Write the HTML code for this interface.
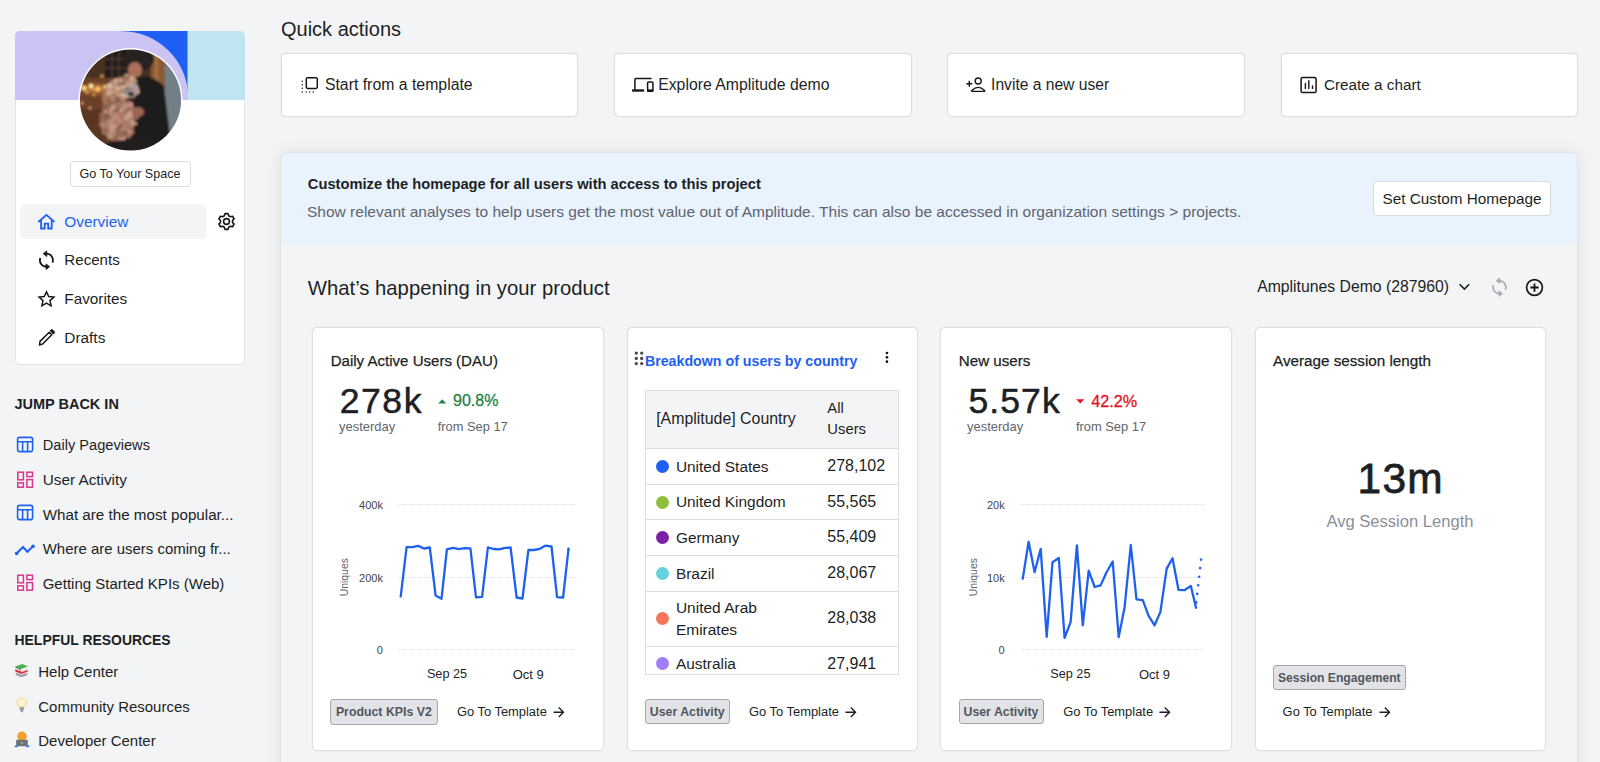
<!DOCTYPE html>
<html><head><meta charset="utf-8"><style>
html,body{margin:0;padding:0;}
body{width:1600px;height:762px;overflow:hidden;position:relative;background:#f3f4f6;font-family:"Liberation Sans", sans-serif;}
.t{position:absolute;white-space:nowrap;}
</style></head><body>
<div style="position:absolute;left:15.00px;top:31.00px;width:230.00px;height:334.00px;background:#fff;border:1px solid #e2e4e8;border-radius:5px;box-sizing:border-box;"></div>
<svg style="position:absolute;left:15.00px;top:31.00px;" width="230" height="69" viewBox="0 0 230 69">
<defs><clipPath id="bc"><path d="M5 0H225A5 5 0 0 1 230 5V69H0V5A5 5 0 0 1 5 0Z"/></clipPath></defs>
<g clip-path="url(#bc)">
<rect x="0" y="0" width="230" height="69" fill="#c1e5f0"/>
<rect x="100" y="0" width="72.5" height="69" fill="#1f5ff4"/>
<rect x="0" y="0" width="106.7" height="69" fill="#cbc3f4"/>
<circle cx="106.7" cy="66.7" r="66.5" fill="#cbc3f4"/>
</g></svg>
<svg style="position:absolute;left:78.00px;top:48.00px;" width="105" height="105" viewBox="0 0 105 105">
<defs><clipPath id="av"><circle cx="52.5" cy="52" r="50.6"/></clipPath>
<radialGradient id="glow" cx="0.5" cy="0.5" r="0.5"><stop offset="0" stop-color="#f0a048"/><stop offset="1" stop-color="#8a5030" stop-opacity="0"/></radialGradient>
<filter id="bl" x="-10%" y="-10%" width="120%" height="120%"><feGaussianBlur stdDeviation="1.0"/></filter>
</defs>
<circle cx="52.5" cy="52" r="52" fill="#fff"/>
<g clip-path="url(#av)"><g filter="url(#bl)">
<rect width="105" height="105" fill="#6a3f27"/>
<rect x="0" y="0" width="105" height="30" fill="#4a3020"/>
<rect x="27" y="1" width="22" height="29" fill="#241c1a"/>
<path d="M34 1V30M41 1V30M27 11H49M27 20H49" stroke="#5a4434" stroke-width="1"/>
<ellipse cx="18" cy="41" rx="22" ry="9" fill="url(#glow)"/>
<circle cx="6" cy="40" r="2.6" fill="#ffd77a"/><circle cx="13" cy="38" r="2.2" fill="#fff0b0"/><circle cx="20" cy="41" r="2.4" fill="#ffc860"/><circle cx="27" cy="39" r="1.8" fill="#ffe39a"/><circle cx="9" cy="44" r="1.6" fill="#f6a848"/><circle cx="31" cy="43" r="1.6" fill="#f0a040"/><circle cx="16" cy="47" r="1.3" fill="#e89a48"/><circle cx="4" cy="55" r="1.8" fill="#c98a60"/><circle cx="12" cy="60" r="1.4" fill="#d89870"/><circle cx="24" cy="28" r="1.6" fill="#e0a060"/><circle cx="92" cy="38" r="2.2" fill="#e8b070"/><circle cx="96" cy="48" r="1.6" fill="#a8b4b8"/><circle cx="90" cy="62" r="1.4" fill="#9fb0a8"/>
<rect x="0" y="62" width="28" height="43" fill="#5a3424"/>
<rect x="73" y="4" width="14" height="84" fill="#8b5a36"/>
<rect x="77" y="4" width="3" height="84" fill="#a86e40"/>
<rect x="87" y="16" width="18" height="74" fill="#718086"/>
<ellipse cx="61" cy="11" rx="15" ry="12" fill="#262222"/>
<ellipse cx="57" cy="22" rx="7" ry="8" fill="#a86e58"/>
<path d="M50 32Q70 22 86 38L94 105H46Z" fill="#1c1a1e"/>
<ellipse cx="31" cy="50" rx="7" ry="12" fill="#a87456"/>
<ellipse cx="45" cy="40" rx="14" ry="11" fill="#b89078"/>
<ellipse cx="40" cy="72" rx="17" ry="21" fill="#a47a64"/>
<circle cx="45.8" cy="48.8" r="2.2" fill="#9a7060"/><circle cx="33.7" cy="41.5" r="2.7" fill="#d8b8a0"/><circle cx="44.6" cy="45.8" r="3.5" fill="#d8b8a0"/><circle cx="34.2" cy="37.7" r="2.3" fill="#d0a88e"/><circle cx="45.7" cy="44.6" r="3.4" fill="#d8b8a0"/><circle cx="44.3" cy="30.2" r="1.6" fill="#9a7060"/><circle cx="57.8" cy="42.8" r="3.1" fill="#a8806a"/><circle cx="32.5" cy="41.7" r="3.3" fill="#d8b8a0"/><circle cx="34.4" cy="46.6" r="2.4" fill="#d0a88e"/><circle cx="48.4" cy="37.4" r="1.8" fill="#d0a88e"/><circle cx="44.4" cy="49.8" r="3.1" fill="#a8806a"/><circle cx="33.0" cy="45.2" r="2.6" fill="#9a7060"/><circle cx="35.1" cy="35.3" r="3.3" fill="#c09478"/><circle cx="54.3" cy="30.6" r="2.8" fill="#d0a88e"/><circle cx="42.3" cy="33.5" r="2.6" fill="#9a7060"/><circle cx="33.5" cy="35.7" r="1.9" fill="#9a7060"/><circle cx="44.4" cy="44.2" r="2.5" fill="#d8b8a0"/><circle cx="56.4" cy="45.7" r="2.3" fill="#d0a88e"/><circle cx="54.7" cy="41.0" r="2.3" fill="#c09478"/><circle cx="56.3" cy="42.6" r="1.6" fill="#9a7060"/><circle cx="38.1" cy="49.8" r="3.5" fill="#9a7060"/><circle cx="45.3" cy="42.3" r="1.5" fill="#c09478"/><circle cx="42.8" cy="38.8" r="1.9" fill="#d8b8a0"/><circle cx="43.0" cy="45.9" r="2.9" fill="#a8806a"/><circle cx="39.3" cy="50.8" r="3.3" fill="#d8b8a0"/><circle cx="35.0" cy="47.8" r="2.3" fill="#9a7060"/><circle cx="43.0" cy="36.5" r="3.4" fill="#9a7060"/><circle cx="43.4" cy="49.5" r="2.9" fill="#a8806a"/><circle cx="38.0" cy="42.3" r="2.1" fill="#a8806a"/><circle cx="54.6" cy="40.6" r="2.7" fill="#c09478"/><circle cx="36.8" cy="46.5" r="1.8" fill="#a8806a"/><circle cx="32.9" cy="42.1" r="2.2" fill="#a8806a"/><circle cx="44.8" cy="38.2" r="1.6" fill="#c09478"/><circle cx="52.3" cy="38.6" r="2.4" fill="#9a7060"/><circle cx="39.9" cy="37.0" r="1.9" fill="#a8806a"/><circle cx="49.3" cy="34.9" r="3.1" fill="#c09478"/><circle cx="45.3" cy="38.1" r="2.6" fill="#d0a88e"/><circle cx="42.4" cy="45.3" r="3.1" fill="#d0a88e"/><circle cx="39.2" cy="48.7" r="2.8" fill="#c09478"/><circle cx="51.8" cy="44.1" r="2.2" fill="#d0a88e"/><circle cx="32.2" cy="44.2" r="1.8" fill="#a8806a"/><circle cx="44.7" cy="34.4" r="2.6" fill="#a8806a"/><circle cx="45.8" cy="44.1" r="2.6" fill="#d0a88e"/><circle cx="39.5" cy="50.1" r="2.6" fill="#a8806a"/><circle cx="37.7" cy="49.2" r="1.7" fill="#9a7060"/><circle cx="42.0" cy="43.6" r="2.1" fill="#a8806a"/><circle cx="33.3" cy="42.1" r="2.1" fill="#9a7060"/><circle cx="32.9" cy="46.2" r="1.8" fill="#c09478"/><circle cx="31.5" cy="41.6" r="2.7" fill="#9a7060"/><circle cx="31.6" cy="44.7" r="3.4" fill="#d0a88e"/><circle cx="54.9" cy="41.6" r="3.0" fill="#9a7060"/><circle cx="55.8" cy="38.0" r="3.3" fill="#c09478"/><circle cx="54.3" cy="30.8" r="1.7" fill="#d0a88e"/><circle cx="58.7" cy="43.2" r="2.9" fill="#d0a88e"/><circle cx="56.3" cy="33.1" r="2.7" fill="#c09478"/><circle cx="39.8" cy="40.5" r="2.5" fill="#d0a88e"/><circle cx="39.3" cy="32.6" r="2.3" fill="#9a7060"/><circle cx="49.0" cy="42.8" r="3.4" fill="#9a7060"/><circle cx="31.9" cy="41.5" r="2.2" fill="#d0a88e"/><circle cx="55.2" cy="47.9" r="1.7" fill="#d0a88e"/><circle cx="48.7" cy="28.9" r="3.1" fill="#c09478"/><circle cx="33.7" cy="40.7" r="2.3" fill="#a8806a"/><circle cx="45.1" cy="49.4" r="2.5" fill="#c09478"/><circle cx="32.0" cy="41.8" r="1.5" fill="#c09478"/><circle cx="45.5" cy="37.5" r="1.6" fill="#d8b8a0"/><circle cx="58.7" cy="38.2" r="1.7" fill="#9a7060"/><circle cx="39.1" cy="40.3" r="1.6" fill="#d8b8a0"/><circle cx="38.1" cy="32.7" r="2.2" fill="#d0a88e"/><circle cx="54.8" cy="39.4" r="1.8" fill="#c09478"/><circle cx="43.0" cy="32.8" r="1.7" fill="#d0a88e"/><circle cx="54.8" cy="42.2" r="2.8" fill="#9a7060"/><circle cx="35.2" cy="47.3" r="2.7" fill="#d8b8a0"/><circle cx="56.2" cy="43.1" r="3.0" fill="#a8806a"/><circle cx="34.0" cy="44.8" r="2.4" fill="#d0a88e"/><circle cx="46.5" cy="46.1" r="2.7" fill="#d8b8a0"/><circle cx="45.9" cy="44.3" r="1.6" fill="#a8806a"/><circle cx="35.0" cy="48.1" r="3.1" fill="#a8806a"/><circle cx="54.0" cy="46.9" r="3.4" fill="#9a7060"/><circle cx="48.2" cy="30.5" r="3.0" fill="#9a7060"/><circle cx="31.8" cy="37.8" r="2.9" fill="#d8b8a0"/><circle cx="49.8" cy="87.2" r="1.6" fill="#a87c66"/><circle cx="26.6" cy="65.0" r="2.3" fill="#a87c66"/><circle cx="31.0" cy="89.0" r="1.6" fill="#a87c66"/><circle cx="32.4" cy="54.2" r="3.4" fill="#8a5e4a"/><circle cx="38.4" cy="78.2" r="3.5" fill="#8a5e4a"/><circle cx="24.8" cy="70.7" r="1.7" fill="#c88a84"/><circle cx="50.8" cy="81.6" r="2.6" fill="#8a5e4a"/><circle cx="42.1" cy="77.5" r="3.5" fill="#c88a84"/><circle cx="40.0" cy="89.3" r="3.0" fill="#c89c88"/><circle cx="39.7" cy="89.0" r="3.4" fill="#8a5e4a"/><circle cx="35.5" cy="75.1" r="2.5" fill="#c89c88"/><circle cx="49.8" cy="54.0" r="2.3" fill="#8a5e4a"/><circle cx="40.6" cy="54.0" r="2.5" fill="#c89c88"/><circle cx="46.3" cy="83.6" r="3.3" fill="#b88e78"/><circle cx="52.8" cy="82.8" r="3.3" fill="#8a5e4a"/><circle cx="53.1" cy="66.9" r="3.2" fill="#b88e78"/><circle cx="39.1" cy="81.8" r="2.7" fill="#946852"/><circle cx="55.2" cy="63.9" r="2.6" fill="#946852"/><circle cx="32.1" cy="54.1" r="2.7" fill="#8a5e4a"/><circle cx="32.0" cy="66.2" r="1.9" fill="#a87c66"/><circle cx="38.2" cy="91.6" r="1.9" fill="#8a5e4a"/><circle cx="33.5" cy="81.6" r="3.0" fill="#b88e78"/><circle cx="26.9" cy="81.0" r="2.9" fill="#b88e78"/><circle cx="23.9" cy="76.0" r="3.1" fill="#8a5e4a"/><circle cx="57.7" cy="75.8" r="1.6" fill="#c89c88"/><circle cx="43.5" cy="51.8" r="1.6" fill="#b88e78"/><circle cx="51.2" cy="60.8" r="3.1" fill="#a87c66"/><circle cx="56.1" cy="66.8" r="2.0" fill="#b88e78"/><circle cx="41.1" cy="63.9" r="2.7" fill="#c88a84"/><circle cx="50.8" cy="55.8" r="2.0" fill="#a87c66"/><circle cx="35.5" cy="85.2" r="3.0" fill="#a87c66"/><circle cx="46.8" cy="79.6" r="3.3" fill="#a87c66"/><circle cx="31.5" cy="85.1" r="2.9" fill="#a87c66"/><circle cx="50.2" cy="74.3" r="2.3" fill="#a87c66"/><circle cx="43.4" cy="88.3" r="3.4" fill="#c89c88"/><circle cx="47.2" cy="80.8" r="3.3" fill="#a87c66"/><circle cx="36.9" cy="65.6" r="3.3" fill="#946852"/><circle cx="54.3" cy="84.2" r="2.2" fill="#946852"/><circle cx="40.5" cy="60.1" r="2.9" fill="#c88a84"/><circle cx="55.3" cy="65.2" r="1.7" fill="#946852"/><circle cx="33.9" cy="57.7" r="1.7" fill="#c89c88"/><circle cx="35.6" cy="71.7" r="2.1" fill="#c88a84"/><circle cx="33.0" cy="68.2" r="2.8" fill="#c88a84"/><circle cx="46.5" cy="82.8" r="3.3" fill="#c89c88"/><circle cx="52.4" cy="86.8" r="1.8" fill="#946852"/><circle cx="31.1" cy="58.0" r="2.3" fill="#946852"/><circle cx="32.7" cy="60.1" r="2.1" fill="#b88e78"/><circle cx="38.4" cy="65.1" r="1.9" fill="#8a5e4a"/><circle cx="25.1" cy="66.9" r="2.2" fill="#946852"/><circle cx="39.5" cy="77.0" r="1.8" fill="#c89c88"/><circle cx="31.1" cy="71.7" r="3.0" fill="#946852"/><circle cx="52.4" cy="56.9" r="2.4" fill="#a87c66"/><circle cx="30.0" cy="88.2" r="1.7" fill="#946852"/><circle cx="27.5" cy="62.3" r="2.6" fill="#c88a84"/><circle cx="51.5" cy="83.9" r="2.6" fill="#c88a84"/><circle cx="39.3" cy="52.1" r="3.0" fill="#8a5e4a"/><circle cx="27.0" cy="59.2" r="3.1" fill="#8a5e4a"/><circle cx="26.6" cy="69.1" r="1.9" fill="#946852"/><circle cx="33.3" cy="80.7" r="3.2" fill="#c89c88"/><circle cx="53.6" cy="58.5" r="2.3" fill="#8a5e4a"/><circle cx="48.3" cy="65.2" r="2.5" fill="#8a5e4a"/><circle cx="36.2" cy="60.9" r="3.2" fill="#c89c88"/><circle cx="47.7" cy="73.8" r="2.8" fill="#a87c66"/><circle cx="41.9" cy="54.2" r="2.5" fill="#8a5e4a"/><circle cx="34.3" cy="65.1" r="3.1" fill="#b88e78"/><circle cx="52.4" cy="75.6" r="2.8" fill="#c89c88"/><circle cx="47.3" cy="79.6" r="2.8" fill="#b88e78"/><circle cx="50.6" cy="86.7" r="2.7" fill="#a87c66"/><circle cx="54.0" cy="74.8" r="2.5" fill="#c89c88"/><circle cx="23.2" cy="66.9" r="2.1" fill="#946852"/><circle cx="37.8" cy="64.4" r="3.2" fill="#8a5e4a"/><circle cx="40.5" cy="68.0" r="1.7" fill="#946852"/><circle cx="48.2" cy="71.9" r="1.6" fill="#b88e78"/><circle cx="25.6" cy="79.4" r="2.5" fill="#a87c66"/><circle cx="42.6" cy="58.3" r="3.2" fill="#c88a84"/><circle cx="46.7" cy="85.1" r="2.9" fill="#8a5e4a"/><circle cx="44.9" cy="63.9" r="2.5" fill="#a87c66"/><circle cx="24.7" cy="76.2" r="2.3" fill="#b88e78"/><circle cx="36.7" cy="73.2" r="2.0" fill="#946852"/><circle cx="29.8" cy="76.3" r="2.3" fill="#a87c66"/><circle cx="43.1" cy="61.5" r="2.2" fill="#c89c88"/><circle cx="33.0" cy="70.1" r="1.5" fill="#8a5e4a"/><circle cx="33.9" cy="77.1" r="1.6" fill="#a87c66"/><circle cx="30.7" cy="62.8" r="1.9" fill="#a87c66"/><circle cx="31.7" cy="79.1" r="1.6" fill="#c88a84"/><circle cx="50.8" cy="76.4" r="2.3" fill="#a87c66"/><circle cx="54.2" cy="60.8" r="2.0" fill="#c89c88"/><circle cx="32.8" cy="73.4" r="2.7" fill="#946852"/><circle cx="51.8" cy="63.2" r="3.1" fill="#946852"/><circle cx="37.5" cy="91.3" r="2.4" fill="#946852"/><circle cx="26.6" cy="73.2" r="1.6" fill="#946852"/><circle cx="32.7" cy="62.6" r="1.7" fill="#c88a84"/><circle cx="35.1" cy="74.6" r="2.7" fill="#a87c66"/><circle cx="45.3" cy="73.3" r="1.8" fill="#a87c66"/><circle cx="32.2" cy="73.1" r="2.5" fill="#946852"/><circle cx="45.4" cy="92.7" r="2.5" fill="#c89c88"/><circle cx="55.2" cy="61.4" r="1.6" fill="#946852"/><circle cx="40.1" cy="54.5" r="2.3" fill="#946852"/><circle cx="44.7" cy="84.9" r="2.5" fill="#8a5e4a"/><circle cx="32.5" cy="87.7" r="3.4" fill="#b88e78"/><circle cx="48.7" cy="54.6" r="2.3" fill="#8a5e4a"/><circle cx="35.1" cy="79.3" r="3.1" fill="#c89c88"/><circle cx="42.1" cy="91.3" r="2.5" fill="#946852"/><circle cx="45.5" cy="57.9" r="3.0" fill="#c88a84"/><circle cx="34.3" cy="51.7" r="1.6" fill="#b88e78"/><circle cx="39.3" cy="68.8" r="2.4" fill="#c88a84"/><circle cx="37.5" cy="65.8" r="2.0" fill="#c88a84"/><circle cx="53.2" cy="78.0" r="1.6" fill="#c89c88"/><circle cx="52.3" cy="60.6" r="2.2" fill="#946852"/><circle cx="47.9" cy="72.1" r="3.1" fill="#a87c66"/><circle cx="34.7" cy="82.4" r="2.4" fill="#c88a84"/><circle cx="43.7" cy="89.7" r="3.5" fill="#c88a84"/><circle cx="51.1" cy="89.1" r="1.7" fill="#946852"/><circle cx="48.3" cy="69.9" r="2.6" fill="#c89c88"/><circle cx="22.9" cy="71.3" r="2.1" fill="#8a5e4a"/><circle cx="42.5" cy="57.3" r="2.7" fill="#a87c66"/><circle cx="42.8" cy="65.4" r="1.5" fill="#a87c66"/><circle cx="45.3" cy="91.7" r="1.7" fill="#c89c88"/><circle cx="26.8" cy="83.8" r="2.9" fill="#a87c66"/><circle cx="30.1" cy="57.1" r="3.2" fill="#946852"/><circle cx="28.0" cy="82.3" r="3.1" fill="#946852"/><circle cx="47.1" cy="57.4" r="3.1" fill="#b88e78"/><circle cx="41.2" cy="73.3" r="2.1" fill="#c88a84"/><circle cx="49.4" cy="78.0" r="2.5" fill="#a87c66"/><circle cx="53.2" cy="63.6" r="2.2" fill="#c88a84"/><circle cx="51.8" cy="78.5" r="2.0" fill="#a87c66"/><circle cx="34.0" cy="84.4" r="1.7" fill="#b88e78"/><circle cx="33.1" cy="89.1" r="1.9" fill="#b88e78"/><circle cx="52.6" cy="56.5" r="2.7" fill="#c88a84"/><circle cx="28.6" cy="68.8" r="3.4" fill="#8a5e4a"/><circle cx="51.9" cy="67.2" r="3.0" fill="#c89c88"/><circle cx="26.5" cy="75.2" r="1.6" fill="#a87c66"/><circle cx="42.2" cy="78.2" r="2.9" fill="#946852"/><circle cx="35.5" cy="71.9" r="2.4" fill="#b88e78"/><circle cx="39.7" cy="60.4" r="2.4" fill="#946852"/><circle cx="32.2" cy="73.9" r="3.1" fill="#b88e78"/><circle cx="47.8" cy="79.3" r="2.3" fill="#a87c66"/><circle cx="43.5" cy="86.8" r="3.1" fill="#946852"/><circle cx="57.6" cy="68.8" r="3.3" fill="#946852"/><circle cx="51.1" cy="66.9" r="3.4" fill="#c89c88"/><circle cx="47.9" cy="42.3" r="1.7" fill="#8e8682"/><circle cx="52.0" cy="47.0" r="2.4" fill="#8e8682"/><circle cx="52.9" cy="37.2" r="1.9" fill="#a49a96"/><circle cx="56.5" cy="46.2" r="1.9" fill="#a49a96"/><circle cx="53.3" cy="42.9" r="2.5" fill="#8e8682"/><circle cx="48.8" cy="47.7" r="1.7" fill="#b8aea8"/><circle cx="55.9" cy="43.6" r="1.2" fill="#8e8682"/><circle cx="58.3" cy="39.9" r="2.0" fill="#a49a96"/><circle cx="49.6" cy="43.9" r="2.1" fill="#8e8682"/><circle cx="49.9" cy="44.5" r="1.3" fill="#8e8682"/><circle cx="59.8" cy="44.4" r="1.4" fill="#b8aea8"/><circle cx="53.0" cy="45.2" r="2.2" fill="#8e8682"/><circle cx="46.6" cy="42.7" r="1.9" fill="#8e8682"/><circle cx="54.5" cy="43.1" r="1.8" fill="#a49a96"/><circle cx="58.3" cy="39.6" r="1.8" fill="#b8aea8"/><circle cx="53.2" cy="37.4" r="2.5" fill="#b8aea8"/><circle cx="48.7" cy="45.2" r="1.4" fill="#a49a96"/><circle cx="55.3" cy="44.0" r="2.3" fill="#a49a96"/><circle cx="49.5" cy="44.9" r="1.8" fill="#8e8682"/><circle cx="46.4" cy="44.7" r="1.4" fill="#8e8682"/><circle cx="53.9" cy="43.9" r="1.8" fill="#a49a96"/><circle cx="56.2" cy="37.9" r="2.0" fill="#a49a96"/>
<ellipse cx="45" cy="36" rx="1.6" ry="1.3" fill="#2a2222"/>
<ellipse cx="53" cy="46" rx="2.8" ry="2.1" fill="#242022"/>
<ellipse cx="60" cy="64" rx="6" ry="5" fill="#9a6652"/>
<path d="M20 97Q55 86 95 98V106H15Z" fill="#221c1e"/>
</g></g></svg>
<div style="position:absolute;left:69.60px;top:161.00px;width:121.20px;height:25.60px;border:1px solid #d9dbe0;border-radius:4px;box-sizing:border-box;background:#fff;"></div>
<div class="t" style="left:79.50px;top:168.47px;font-size:12.56px;line-height:12.56px;color:#1d1f24;font-weight:400;">Go To Your Space</div>
<div style="position:absolute;left:20.00px;top:204.00px;width:187.00px;height:34.60px;background:#f3f4f6;border-radius:5px;"></div>
<svg style="position:absolute;left:37.00px;top:212.50px;" width="19" height="17" viewBox="0 0 19 17"><path d="M1.3 9L9.4 1.9L17.5 9" fill="none" stroke="#1e61f0" stroke-width="1.8"/><path d="M4.1 7V15.5H7.7V10.6H11.2V15.5H14.7V7" fill="none" stroke="#1e61f0" stroke-width="1.8"/></svg>
<div class="t" style="left:64.30px;top:213.70px;font-size:15.36px;line-height:15.36px;color:#1e61f0;font-weight:400;">Overview</div>
<svg style="position:absolute;left:216.50px;top:211.50px;" width="19" height="19" viewBox="0 0 19 19"><g transform="translate(9.5 9.5)"><path d="M-2.19 -5.69 L-1.53 -7.85 L1.53 -7.85 L2.19 -5.69 L3.84 -4.74 L6.04 -5.25 L7.56 -2.60 L6.02 -0.95 L6.02 0.95 L7.56 2.60 L6.04 5.25 L3.84 4.74 L2.19 5.69 L1.53 7.85 L-1.53 7.85 L-2.19 5.69 L-3.84 4.74 L-6.04 5.25 L-7.56 2.60 L-6.02 0.95 L-6.02 -0.95 L-7.56 -2.60 L-6.04 -5.25 L-3.84 -4.74Z" fill="none" stroke="#161616" stroke-width="1.6" stroke-linejoin="round"/><circle r="2.9" fill="none" stroke="#161616" stroke-width="1.6"/></g></svg>
<svg style="position:absolute;left:34.00px;top:248.20px;" width="25" height="25" viewBox="0 0 25 25"><path d="M12.40 5.70 A6.5 6.5 0 0 1 18.43 14.63" fill="none" stroke="#161616" stroke-width="1.8"/><path d="M12.80 2.90 L9.20 5.70 L12.80 8.50Z" fill="#161616" stroke="#161616" stroke-width="0.8" stroke-linejoin="round"/><path d="M6.29 9.98 A6.5 6.5 0 0 0 12.40 18.70" fill="none" stroke="#161616" stroke-width="1.8"/><path d="M12.00 15.90 L15.60 18.70 L12.00 21.50Z" fill="#161616" stroke="#161616" stroke-width="0.8" stroke-linejoin="round"/></svg>
<div class="t" style="left:64.30px;top:252.19px;font-size:15.13px;line-height:15.13px;color:#1d1f24;font-weight:400;">Recents</div>
<svg style="position:absolute;left:37.00px;top:290.00px;" width="19" height="18" viewBox="0 0 19 18"><path d="M9.5 1.8L11.7 6.6L16.9 7.1L13 10.6L14.1 15.8L9.5 13.2L4.9 15.8L6 10.6L2.1 7.1L7.3 6.6Z" fill="none" stroke="#161616" stroke-width="1.5" stroke-linejoin="miter"/></svg>
<div class="t" style="left:64.30px;top:291.03px;font-size:15.32px;line-height:15.32px;color:#1d1f24;font-weight:400;">Favorites</div>
<svg style="position:absolute;left:37.00px;top:329.00px;" width="19" height="18" viewBox="0 0 19 18"><path d="M2.5 16L3 12.4L12.2 3.2L14.8 5.8L5.6 15Z" fill="none" stroke="#161616" stroke-width="1.5" stroke-linejoin="round"/><path d="M13.2 2.2L15 0.9L17.3 3.2L15.9 5" fill="#161616" stroke="#161616" stroke-width="1.5"/></svg>
<div class="t" style="left:64.30px;top:329.96px;font-size:15.40px;line-height:15.40px;color:#1d1f24;font-weight:400;">Drafts</div>
<div class="t" style="left:14.40px;top:397.43px;font-size:14.50px;line-height:14.50px;color:#1d1f24;font-weight:700;">JUMP BACK IN</div>
<svg style="position:absolute;left:16.00px;top:435.50px;" width="18" height="17" viewBox="0 0 18 17"><rect x="1.6" y="1.4" width="15" height="14.2" rx="2" fill="none" stroke="#1e61f0" stroke-width="1.6"/><path d="M1.6 5.8H16.6M6.6 5.8V15.6M11.6 5.8V15.6" stroke="#1e61f0" stroke-width="1.6"/></svg>
<div class="t" style="left:42.70px;top:438.32px;font-size:14.63px;line-height:14.63px;color:#1d1f24;font-weight:400;">Daily Pageviews</div>
<svg style="position:absolute;left:16.00px;top:471.00px;" width="18" height="18" viewBox="0 0 18 18"><g fill="none" stroke="#d9358c" stroke-width="1.5"><rect x="1.8" y="1.2" width="5.6" height="7.6"/><rect x="10.9" y="1.2" width="5.6" height="4.4"/><rect x="1.8" y="11.8" width="5.6" height="4.4"/><rect x="10.9" y="8.6" width="5.6" height="7.6"/></g></svg>
<div class="t" style="left:42.70px;top:472.33px;font-size:15.32px;line-height:15.32px;color:#1d1f24;font-weight:400;">User Activity</div>
<svg style="position:absolute;left:16.00px;top:504.20px;" width="18" height="17" viewBox="0 0 18 17"><rect x="1.6" y="1.4" width="15" height="14.2" rx="2" fill="none" stroke="#1e61f0" stroke-width="1.6"/><path d="M1.6 5.8H16.6M6.6 5.8V15.6M11.6 5.8V15.6" stroke="#1e61f0" stroke-width="1.6"/></svg>
<div class="t" style="left:42.70px;top:506.53px;font-size:15.20px;line-height:15.20px;color:#1d1f24;font-weight:400;">What are the most popular...</div>
<svg style="position:absolute;left:14.00px;top:540.00px;" width="22" height="18" viewBox="0 0 22 18"><path d="M2.3 13.7L9 7L13.4 11.8L19.1 6.3" fill="none" stroke="#1e61f0" stroke-width="2"/><circle cx="2.6" cy="13.5" r="1.8" fill="#1e61f0"/><circle cx="19.1" cy="6.3" r="1.8" fill="#1e61f0"/></svg>
<div class="t" style="left:42.70px;top:541.32px;font-size:14.98px;line-height:14.98px;color:#1d1f24;font-weight:400;">Where are users coming fr...</div>
<svg style="position:absolute;left:16.00px;top:574.30px;" width="18" height="18" viewBox="0 0 18 18"><g fill="none" stroke="#d9358c" stroke-width="1.5"><rect x="1.8" y="1.2" width="5.6" height="7.6"/><rect x="10.9" y="1.2" width="5.6" height="4.4"/><rect x="1.8" y="11.8" width="5.6" height="4.4"/><rect x="10.9" y="8.6" width="5.6" height="7.6"/></g></svg>
<div class="t" style="left:42.70px;top:575.68px;font-size:15.03px;line-height:15.03px;color:#1d1f24;font-weight:400;">Getting Started KPIs (Web)</div>
<div class="t" style="left:14.50px;top:633.50px;font-size:13.94px;line-height:13.94px;color:#1d1f24;font-weight:700;">HELPFUL RESOURCES</div>
<svg style="position:absolute;left:14.00px;top:663.00px;" width="15" height="15" viewBox="0 0 15 15"><path d="M1.5 3.2L8.5 1L13.8 3.6L6.8 6Z" fill="#4caf50"/><path d="M1.5 3.2L6.8 6L6.8 7.3L1.5 4.6Z" fill="#2e7d32"/><path d="M1.3 6.2L7.2 8.6L13.6 6.4L13.6 8.8L7.2 11L1.3 8.6Z" fill="#d32f2f"/><path d="M1.8 9.6L7.2 11.8L13.4 9.8L13.4 12.2L7.2 14.2L1.8 12Z" fill="#9e9e9e"/><path d="M7.2 8.6L13.6 6.4L13.6 7.3L7.2 9.5Z" fill="#fff" opacity="0.7"/></svg>
<div class="t" style="left:38.30px;top:664.31px;font-size:14.99px;line-height:14.99px;color:#1d1f24;font-weight:400;">Help Center</div>
<svg style="position:absolute;left:16.00px;top:697.00px;" width="12" height="17" viewBox="0 0 12 17"><circle cx="5.8" cy="5.6" r="4.6" fill="#fff6d8" stroke="#f8d58a" stroke-width="1.2"/><rect x="3.6" y="10.2" width="4.4" height="3" fill="#9aa0a6"/><path d="M4.4 13.6H7.2L5.8 15.6Z" fill="#606468"/></svg>
<div class="t" style="left:38.30px;top:698.92px;font-size:14.98px;line-height:14.98px;color:#1d1f24;font-weight:400;">Community Resources</div>
<svg style="position:absolute;left:14.00px;top:731.00px;" width="16" height="17" viewBox="0 0 16 17"><circle cx="8" cy="5.3" r="4.8" fill="#f0a030"/><rect x="2.2" y="8.8" width="11.6" height="6.4" rx="0.8" fill="#6d7277"/><rect x="0.8" y="14.4" width="3" height="1.8" fill="#2f7de1"/><rect x="12.2" y="14.4" width="3" height="1.8" fill="#2f7de1"/><circle cx="8" cy="12" r="0.8" fill="#ddd"/></svg>
<div class="t" style="left:38.30px;top:734.03px;font-size:14.97px;line-height:14.97px;color:#1d1f24;font-weight:400;">Developer Center</div>
<div class="t" style="left:281.00px;top:18.57px;font-size:20.00px;line-height:20.00px;color:#1d1f24;font-weight:400;">Quick actions</div>
<div style="position:absolute;left:280.60px;top:53.20px;width:297.70px;height:64.20px;background:#fff;border:1px solid #dcdee2;border-radius:5px;box-sizing:border-box;box-shadow:0 0 1.5px rgba(0,0,0,0.10);"></div>
<div class="t" style="left:324.90px;top:76.80px;font-size:15.83px;line-height:15.83px;color:#1d1f24;font-weight:400;">Start from a template</div>
<div style="position:absolute;left:613.90px;top:53.20px;width:297.70px;height:64.20px;background:#fff;border:1px solid #dcdee2;border-radius:5px;box-sizing:border-box;box-shadow:0 0 1.5px rgba(0,0,0,0.10);"></div>
<div class="t" style="left:658.20px;top:76.83px;font-size:15.80px;line-height:15.80px;color:#1d1f24;font-weight:400;">Explore Amplitude demo</div>
<div style="position:absolute;left:947.20px;top:53.20px;width:297.70px;height:64.20px;background:#fff;border:1px solid #dcdee2;border-radius:5px;box-sizing:border-box;box-shadow:0 0 1.5px rgba(0,0,0,0.10);"></div>
<div class="t" style="left:991.10px;top:76.98px;font-size:15.62px;line-height:15.62px;color:#1d1f24;font-weight:400;">Invite a new user</div>
<div style="position:absolute;left:1280.50px;top:53.20px;width:297.70px;height:64.20px;background:#fff;border:1px solid #dcdee2;border-radius:5px;box-sizing:border-box;box-shadow:0 0 1.5px rgba(0,0,0,0.10);"></div>
<div class="t" style="left:1324.00px;top:77.27px;font-size:15.28px;line-height:15.28px;color:#1d1f24;font-weight:400;">Create a chart</div>
<svg style="position:absolute;left:300.00px;top:75.00px;" width="20" height="20" viewBox="0 0 20 20"><rect x="6.3" y="2.8" width="11" height="10.6" rx="1.3" fill="none" stroke="#161616" stroke-width="1.5"/><g fill="#161616"><circle cx="2.3" cy="6.2" r="0.75"/><circle cx="2.3" cy="9.8" r="0.75"/><circle cx="2.3" cy="13.3" r="0.75"/><circle cx="2.3" cy="17" r="0.75"/><circle cx="6.2" cy="17" r="0.75"/><circle cx="9.6" cy="17" r="0.75"/><circle cx="13.3" cy="17" r="0.75"/></g></svg>
<svg style="position:absolute;left:630.00px;top:75.00px;" width="26" height="20" viewBox="0 0 26 20"><path d="M4.9 15V4.4Q4.9 3.5 5.8 3.5H21.6" fill="none" stroke="#161616" stroke-width="1.5"/><rect x="2.1" y="14.3" width="12" height="2.4" fill="#161616"/><rect x="17.6" y="6.9" width="5.3" height="9.3" rx="0.8" fill="none" stroke="#161616" stroke-width="1.5"/><rect x="17.2" y="14.4" width="6" height="2.3" fill="#161616"/></svg>
<svg style="position:absolute;left:962.00px;top:75.00px;" width="26" height="20" viewBox="0 0 26 20"><path d="M4.3 8.8H10.3M7.3 5.8V11.8" stroke="#161616" stroke-width="1.4"/><circle cx="16.2" cy="6" r="3" fill="none" stroke="#161616" stroke-width="1.4"/><path d="M9.8 16.4V15.4Q13 12.4 16.2 12.4T22.6 15.4V16.4Z" fill="none" stroke="#161616" stroke-width="1.4" stroke-linejoin="round"/></svg>
<svg style="position:absolute;left:1298.00px;top:75.00px;" width="21" height="20" viewBox="0 0 21 20"><rect x="3.1" y="2.6" width="15" height="15" rx="1.6" fill="none" stroke="#161616" stroke-width="1.5"/><path d="M7.4 8.4V13.4M10.8 5.8V13.4M14.5 11V13.4" stroke="#161616" stroke-width="1.4" stroke-linecap="round"/></svg>
<div style="position:absolute;left:280.20px;top:152.40px;width:1297.60px;height:647.60px;background:#f3f4f6;border:1px solid #e1e2e5;border-radius:7px;box-sizing:border-box;box-shadow:0 0 16px rgba(0,0,0,0.09);overflow:hidden;"></div>
<div style="position:absolute;left:281.20px;top:153.40px;width:1295.60px;height:90.60px;background:#e9f3fe;border-radius:6px 6px 0 0;"></div>
<div class="t" style="left:307.80px;top:176.56px;font-size:14.69px;line-height:14.69px;color:#1d1f24;font-weight:700;">Customize the homepage for all users with access to this project</div>
<div class="t" style="left:307.00px;top:203.85px;font-size:15.53px;line-height:15.53px;color:#5f646e;font-weight:400;">Show relevant analyses to help users get the most value out of Amplitude. This can also be accessed in organization settings &gt; projects.</div>
<div style="position:absolute;left:1373.20px;top:181.00px;width:178.00px;height:34.80px;background:#fff;border:1px solid #d7dade;border-radius:4px;box-sizing:border-box;"></div>
<div class="t" style="left:1382.60px;top:190.65px;font-size:15.30px;line-height:15.30px;color:#1d1f24;font-weight:400;">Set Custom Homepage</div>
<div class="t" style="left:307.80px;top:278.32px;font-size:20.30px;line-height:20.30px;color:#1d1f24;font-weight:400;">What’s happening in your product</div>
<div class="t" style="left:1257.20px;top:278.65px;font-size:15.77px;line-height:15.77px;color:#1d1f24;font-weight:400;">Amplitunes Demo (287960)</div>
<svg style="position:absolute;left:1457.00px;top:281.00px;" width="15" height="12" viewBox="0 0 15 12"><path d="M2.6 3.2L7.4 8L12.2 3.2" fill="none" stroke="#1d1f24" stroke-width="1.6"/></svg>
<svg style="position:absolute;left:1487.20px;top:275.20px;" width="25" height="25" viewBox="0 0 25 25"><path d="M12.40 5.80 A6.4 6.4 0 0 1 18.33 14.60" fill="none" stroke="#a9acb2" stroke-width="1.7"/><path d="M12.80 3.00 L9.20 5.80 L12.80 8.60Z" fill="#a9acb2" stroke="#a9acb2" stroke-width="0.8" stroke-linejoin="round"/><path d="M6.39 10.01 A6.4 6.4 0 0 0 12.40 18.60" fill="none" stroke="#a9acb2" stroke-width="1.7"/><path d="M12.00 15.80 L15.60 18.60 L12.00 21.40Z" fill="#a9acb2" stroke="#a9acb2" stroke-width="0.8" stroke-linejoin="round"/></svg>
<svg style="position:absolute;left:1522.60px;top:275.60px;" width="23" height="23" viewBox="0 0 23 23"><circle cx="11.5" cy="11.5" r="7.9" fill="none" stroke="#161616" stroke-width="1.7"/><path d="M11.5 7.4V15.8M7.4 11.5H15.6" stroke="#161616" stroke-width="1.8"/></svg>
<div style="position:absolute;left:312.40px;top:326.60px;width:291.60px;height:424.20px;background:#fff;border:1px solid #dddfe3;border-radius:5px;box-sizing:border-box;box-shadow:0 0 1.5px rgba(0,0,0,0.08);"></div>
<div style="position:absolute;left:626.60px;top:326.60px;width:291.60px;height:424.20px;background:#fff;border:1px solid #dddfe3;border-radius:5px;box-sizing:border-box;box-shadow:0 0 1.5px rgba(0,0,0,0.08);"></div>
<div style="position:absolute;left:940.40px;top:326.60px;width:291.60px;height:424.20px;background:#fff;border:1px solid #dddfe3;border-radius:5px;box-sizing:border-box;box-shadow:0 0 1.5px rgba(0,0,0,0.08);"></div>
<div style="position:absolute;left:1254.60px;top:326.60px;width:291.60px;height:424.20px;background:#fff;border:1px solid #dddfe3;border-radius:5px;box-sizing:border-box;box-shadow:0 0 1.5px rgba(0,0,0,0.08);"></div>
<div class="t" style="left:330.70px;top:353.36px;font-size:15.05px;line-height:15.05px;color:#1d1f24;font-weight:400;-webkit-text-stroke:0.25px #1d1f24;">Daily Active Users (DAU)</div>
<div class="t" style="left:339.70px;top:383.86px;font-size:35.60px;line-height:35.60px;color:#1d1f24;font-weight:400;letter-spacing:1.55px;-webkit-text-stroke:0.5px #1d1f24;">278k</div>
<svg style="position:absolute;left:436.50px;top:397.50px;" width="11" height="7" viewBox="0 0 11 7"><path d="M1.2 5.5L5.2 1.2L9.2 5.5Z" fill="#1f8548"/></svg>
<div class="t" style="left:453.00px;top:393.16px;font-size:16.00px;line-height:16.00px;color:#1f8548;font-weight:400;-webkit-text-stroke:0.3px #1f8548;">90.8%</div>
<div class="t" style="left:339.00px;top:421.03px;font-size:12.96px;line-height:12.96px;color:#5f646e;font-weight:400;">yesterday</div>
<div class="t" style="left:437.70px;top:421.11px;font-size:12.87px;line-height:12.87px;color:#5f646e;font-weight:400;">from Sep 17</div>
<div style="position:absolute;left:398.8px;top:503.5px;width:176.49999999999994px;height:0;border-top:1px dotted #dadde1;"></div>
<div style="position:absolute;left:398.8px;top:576.8px;width:176.49999999999994px;height:0;border-top:1px dotted #dadde1;"></div>
<div style="position:absolute;left:398.8px;top:649.3px;width:176.49999999999994px;height:0;border-top:1px dotted #dadde1;"></div>
<div class="t" style="left:322.9px;width:60px;text-align:right;top:499.69px;font-size:11px;line-height:11px;color:#3f434b;">400k</div>
<div class="t" style="left:322.9px;width:60px;text-align:right;top:572.99px;font-size:11px;line-height:11px;color:#3f434b;">200k</div>
<div class="t" style="left:322.9px;width:60px;text-align:right;top:645.49px;font-size:11px;line-height:11px;color:#3f434b;">0</div>
<div class="t" style="left:315.3px;top:571.5px;width:60px;text-align:center;font-size:10.4px;line-height:10.4px;color:#5f646e;transform:rotate(-90deg);">Uniques</div>
<svg style="position:absolute;left:0;top:0" width="1600" height="762"><path d="M400.6 597.3 L406.6 547.1 L412.5 547.1 L418.1 545.9 L424.0 548.5 L429.8 547.5 L435.6 595.6 L441.5 598.8 L446.9 549.4 L453.1 547.8 L459.0 549.1 L464.8 548.1 L470.4 548.4 L476.0 597.3 L482.1 596.9 L487.9 547.3 L493.5 549.0 L499.1 549.4 L505.0 547.8 L510.6 547.5 L516.6 597.5 L522.5 598.5 L528.4 549.8 L534.0 550.0 L539.8 548.8 L545.6 545.6 L551.5 546.5 L557.1 597.2 L563.1 597.5 L568.5 548.8" fill="none" stroke="#1e61f0" stroke-width="2.3" stroke-linejoin="round"/><path d="M568.5 548.8 L574.4 547.5" fill="none" stroke="#1e61f0" stroke-width="2.6" stroke-dasharray="0.01 8.6" stroke-linecap="round"/></svg>
<div class="t" style="left:426.90px;top:667.94px;font-size:12.71px;line-height:12.71px;color:#1d1f24;font-weight:400;">Sep 25</div>
<div class="t" style="left:512.70px;top:667.70px;font-size:13.00px;line-height:13.00px;color:#1d1f24;font-weight:400;">Oct 9</div>
<div style="position:absolute;left:330.30px;top:699.00px;width:107.30px;height:25.50px;background:#e2e3e7;border:1px solid #a4a7ae;border-radius:3px;box-sizing:border-box;"></div>
<div class="t" style="left:335.90px;top:706.15px;font-size:12.34px;line-height:12.34px;color:#52565e;font-weight:700;">Product KPIs V2</div>
<div class="t" style="left:456.90px;top:705.96px;font-size:12.92px;line-height:12.92px;color:#1d1f24;font-weight:400;">Go To Template</div>
<svg style="position:absolute;left:552.10px;top:706.40px;" width="14" height="12" viewBox="0 0 14 12"><path d="M1.5 6.2H11.5M6.8 1.5L11.5 6.2L6.8 10.9" fill="none" stroke="#1d1f24" stroke-width="1.4"/></svg>
<svg style="position:absolute;left:632.00px;top:350.00px;" width="13" height="17" viewBox="0 0 13 17"><g fill="#45474d"><circle cx="4.3" cy="3.1" r="1.65"/><circle cx="9.7" cy="3.1" r="1.65"/><circle cx="4.3" cy="8.4" r="1.65"/><circle cx="9.7" cy="8.4" r="1.65"/><circle cx="4.3" cy="13.6" r="1.65"/><circle cx="9.7" cy="13.6" r="1.65"/></g></svg>
<div class="t" style="left:644.90px;top:354.06px;font-size:14.22px;line-height:14.22px;color:#1e61f0;font-weight:700;">Breakdown of users by country</div>
<svg style="position:absolute;left:880.00px;top:349.00px;" width="13" height="17" viewBox="0 0 13 17"><g fill="#161616"><circle cx="6.95" cy="4.0" r="1.35"/><circle cx="6.95" cy="8.3" r="1.35"/><circle cx="6.95" cy="12.7" r="1.35"/></g></svg>
<div style="position:absolute;left:644.90px;top:389.60px;width:254.60px;height:284.40px;background:#fff;border:1px solid #dcdee2;border-bottom:none;box-sizing:border-box;"></div>
<div style="position:absolute;left:645.90px;top:390.60px;width:252.60px;height:58.00px;background:#f3f4f6;"></div>
<div style="position:absolute;left:645.90px;top:448.10px;width:252.60px;height:1.00px;background:#dcdee2;"></div>
<div style="position:absolute;left:645.90px;top:484.10px;width:252.60px;height:1.00px;background:#dcdee2;"></div>
<div style="position:absolute;left:645.90px;top:518.80px;width:252.60px;height:1.00px;background:#dcdee2;"></div>
<div style="position:absolute;left:645.90px;top:554.80px;width:252.60px;height:1.00px;background:#dcdee2;"></div>
<div style="position:absolute;left:645.90px;top:590.50px;width:252.60px;height:1.00px;background:#dcdee2;"></div>
<div style="position:absolute;left:645.90px;top:645.50px;width:252.60px;height:1.00px;background:#dcdee2;"></div>
<div style="position:absolute;left:644.90px;top:673.50px;width:254.60px;height:1.00px;background:#dcdee2;"></div>
<div class="t" style="left:656.20px;top:411.04px;font-size:15.90px;line-height:15.90px;color:#1d1f24;font-weight:400;">[Amplitude] Country</div>
<div class="t" style="left:827.30px;top:401.15px;font-size:14.82px;line-height:14.82px;color:#1d1f24;font-weight:400;">All</div>
<div class="t" style="left:827.30px;top:422.15px;font-size:14.82px;line-height:14.82px;color:#1d1f24;font-weight:400;">Users</div>
<div style="position:absolute;left:656.2px;top:459.70px;width:13px;height:13px;border-radius:50%;background:#1f5ff4;"></div>
<div class="t" style="left:675.90px;top:458.63px;font-size:15.44px;line-height:15.44px;color:#1d1f24;font-weight:400;">United States</div>
<div class="t" style="left:827.30px;top:458.16px;font-size:16.00px;line-height:16.00px;color:#1d1f24;font-weight:400;">278,102</div>
<div style="position:absolute;left:656.2px;top:495.50px;width:13px;height:13px;border-radius:50%;background:#8fbd3c;"></div>
<div class="t" style="left:675.90px;top:494.43px;font-size:15.44px;line-height:15.44px;color:#1d1f24;font-weight:400;">United Kingdom</div>
<div class="t" style="left:827.30px;top:493.96px;font-size:16.00px;line-height:16.00px;color:#1d1f24;font-weight:400;">55,565</div>
<div style="position:absolute;left:656.2px;top:531.00px;width:13px;height:13px;border-radius:50%;background:#7b1fa8;"></div>
<div class="t" style="left:675.90px;top:529.93px;font-size:15.44px;line-height:15.44px;color:#1d1f24;font-weight:400;">Germany</div>
<div class="t" style="left:827.30px;top:529.46px;font-size:16.00px;line-height:16.00px;color:#1d1f24;font-weight:400;">55,409</div>
<div style="position:absolute;left:656.2px;top:566.70px;width:13px;height:13px;border-radius:50%;background:#63d2dc;"></div>
<div class="t" style="left:675.90px;top:565.63px;font-size:15.44px;line-height:15.44px;color:#1d1f24;font-weight:400;">Brazil</div>
<div class="t" style="left:827.30px;top:565.16px;font-size:16.00px;line-height:16.00px;color:#1d1f24;font-weight:400;">28,067</div>
<div style="position:absolute;left:656.2px;top:612.00px;width:13px;height:13px;border-radius:50%;background:#f4755c;"></div>
<div class="t" style="left:675.90px;top:599.88px;font-size:15.50px;line-height:15.50px;color:#1d1f24;font-weight:400;">United Arab</div>
<div class="t" style="left:675.90px;top:621.58px;font-size:15.50px;line-height:15.50px;color:#1d1f24;font-weight:400;">Emirates</div>
<div class="t" style="left:827.30px;top:610.46px;font-size:16.00px;line-height:16.00px;color:#1d1f24;font-weight:400;">28,038</div>
<div style="position:absolute;left:656.2px;top:657.30px;width:13px;height:13px;border-radius:50%;background:#a07ef8;"></div>
<div class="t" style="left:675.90px;top:656.23px;font-size:15.44px;line-height:15.44px;color:#1d1f24;font-weight:400;">Australia</div>
<div class="t" style="left:827.30px;top:655.76px;font-size:16.00px;line-height:16.00px;color:#1d1f24;font-weight:400;">27,941</div>
<div style="position:absolute;left:644.80px;top:699.20px;width:85.00px;height:25.20px;background:#e2e3e7;border:1px solid #a4a7ae;border-radius:3px;box-sizing:border-box;"></div>
<div class="t" style="left:649.80px;top:706.35px;font-size:12.34px;line-height:12.34px;color:#52565e;font-weight:700;">User Activity</div>
<div class="t" style="left:749.00px;top:705.96px;font-size:12.92px;line-height:12.92px;color:#1d1f24;font-weight:400;">Go To Template</div>
<svg style="position:absolute;left:844.20px;top:706.40px;" width="14" height="12" viewBox="0 0 14 12"><path d="M1.5 6.2H11.5M6.8 1.5L11.5 6.2L6.8 10.9" fill="none" stroke="#1d1f24" stroke-width="1.4"/></svg>
<div class="t" style="left:958.80px;top:353.27px;font-size:15.16px;line-height:15.16px;color:#1d1f24;font-weight:400;-webkit-text-stroke:0.25px #1d1f24;">New users</div>
<div class="t" style="left:968.50px;top:383.86px;font-size:35.60px;line-height:35.60px;color:#1d1f24;font-weight:400;letter-spacing:1.05px;-webkit-text-stroke:0.5px #1d1f24;">5.57k</div>
<svg style="position:absolute;left:1075.00px;top:397.50px;" width="11" height="7" viewBox="0 0 11 7"><path d="M1.2 1.2L5.2 5.5L9.2 1.2Z" fill="#e0131c"/></svg>
<div class="t" style="left:1091.30px;top:392.99px;font-size:16.20px;line-height:16.20px;color:#e0131c;font-weight:400;-webkit-text-stroke:0.3px #e0131c;">42.2%</div>
<div class="t" style="left:967.00px;top:421.03px;font-size:12.96px;line-height:12.96px;color:#5f646e;font-weight:400;">yesterday</div>
<div class="t" style="left:1076.00px;top:421.11px;font-size:12.87px;line-height:12.87px;color:#5f646e;font-weight:400;">from Sep 17</div>
<div style="position:absolute;left:1020.7px;top:503.5px;width:183.0999999999999px;height:0;border-top:1px dotted #dadde1;"></div>
<div style="position:absolute;left:1020.7px;top:576.8px;width:183.0999999999999px;height:0;border-top:1px dotted #dadde1;"></div>
<div style="position:absolute;left:1020.7px;top:649.3px;width:183.0999999999999px;height:0;border-top:1px dotted #dadde1;"></div>
<div class="t" style="left:944.7px;width:60px;text-align:right;top:499.69px;font-size:11px;line-height:11px;color:#3f434b;">20k</div>
<div class="t" style="left:944.7px;width:60px;text-align:right;top:572.99px;font-size:11px;line-height:11px;color:#3f434b;">10k</div>
<div class="t" style="left:944.7px;width:60px;text-align:right;top:645.49px;font-size:11px;line-height:11px;color:#3f434b;">0</div>
<div class="t" style="left:944.1px;top:571.5px;width:60px;text-align:center;font-size:10.4px;line-height:10.4px;color:#5f646e;transform:rotate(-90deg);">Uniques</div>
<svg style="position:absolute;left:0;top:0" width="1600" height="762"><path d="M1022.6 579.6 L1028.6 541.8 L1034.6 572.2 L1040.7 548.9 L1046.7 636.8 L1052.5 562.3 L1058.8 558.0 L1064.6 637.9 L1070.6 622.1 L1076.9 545.3 L1082.8 625.3 L1088.7 570.6 L1094.7 587.0 L1100.6 585.4 L1106.4 572.5 L1112.7 561.5 L1118.7 637.1 L1124.6 607.2 L1130.8 545.0 L1136.5 599.3 L1142.8 600.1 L1148.6 615.8 L1154.6 625.3 L1160.4 611.9 L1166.7 568.6 L1172.5 558.3 L1178.5 589.8 L1184.5 590.2 L1190.8 585.9 L1196.3 608.7" fill="none" stroke="#1e61f0" stroke-width="2.3" stroke-linejoin="round"/><path d="M1196.3 602.4 L1202.0 551.3" fill="none" stroke="#1e61f0" stroke-width="2.6" stroke-dasharray="0.01 8.6" stroke-linecap="round"/></svg>
<div class="t" style="left:1050.20px;top:667.94px;font-size:12.71px;line-height:12.71px;color:#1d1f24;font-weight:400;">Sep 25</div>
<div class="t" style="left:1139.00px;top:667.70px;font-size:13.00px;line-height:13.00px;color:#1d1f24;font-weight:400;">Oct 9</div>
<div style="position:absolute;left:958.50px;top:699.00px;width:85.80px;height:25.40px;background:#e2e3e7;border:1px solid #a4a7ae;border-radius:3px;box-sizing:border-box;"></div>
<div class="t" style="left:963.50px;top:706.15px;font-size:12.34px;line-height:12.34px;color:#52565e;font-weight:700;">User Activity</div>
<div class="t" style="left:1063.20px;top:705.96px;font-size:12.92px;line-height:12.92px;color:#1d1f24;font-weight:400;">Go To Template</div>
<svg style="position:absolute;left:1158.40px;top:706.40px;" width="14" height="12" viewBox="0 0 14 12"><path d="M1.5 6.2H11.5M6.8 1.5L11.5 6.2L6.8 10.9" fill="none" stroke="#1d1f24" stroke-width="1.4"/></svg>
<div class="t" style="left:1273.00px;top:353.21px;font-size:15.23px;line-height:15.23px;color:#1d1f24;font-weight:400;-webkit-text-stroke:0.25px #1d1f24;">Average session length</div>
<div class="t" style="left:1357.60px;top:458.41px;font-size:42.40px;line-height:42.40px;color:#1d1f24;font-weight:400;letter-spacing:1.3px;-webkit-text-stroke:0.8px #1d1f24;">13m</div>
<div class="t" style="left:1326.40px;top:513.71px;font-size:16.59px;line-height:16.59px;color:#8a8f98;font-weight:400;">Avg Session Length</div>
<div style="position:absolute;left:1273.10px;top:664.70px;width:133.40px;height:25.20px;background:#e2e3e7;border:1px solid #a4a7ae;border-radius:3px;box-sizing:border-box;"></div>
<div class="t" style="left:1278.00px;top:672.03px;font-size:12.13px;line-height:12.13px;color:#52565e;font-weight:700;">Session Engagement</div>
<div class="t" style="left:1282.60px;top:705.96px;font-size:12.92px;line-height:12.92px;color:#1d1f24;font-weight:400;">Go To Template</div>
<svg style="position:absolute;left:1377.80px;top:706.40px;" width="14" height="12" viewBox="0 0 14 12"><path d="M1.5 6.2H11.5M6.8 1.5L11.5 6.2L6.8 10.9" fill="none" stroke="#1d1f24" stroke-width="1.4"/></svg>
</body></html>
